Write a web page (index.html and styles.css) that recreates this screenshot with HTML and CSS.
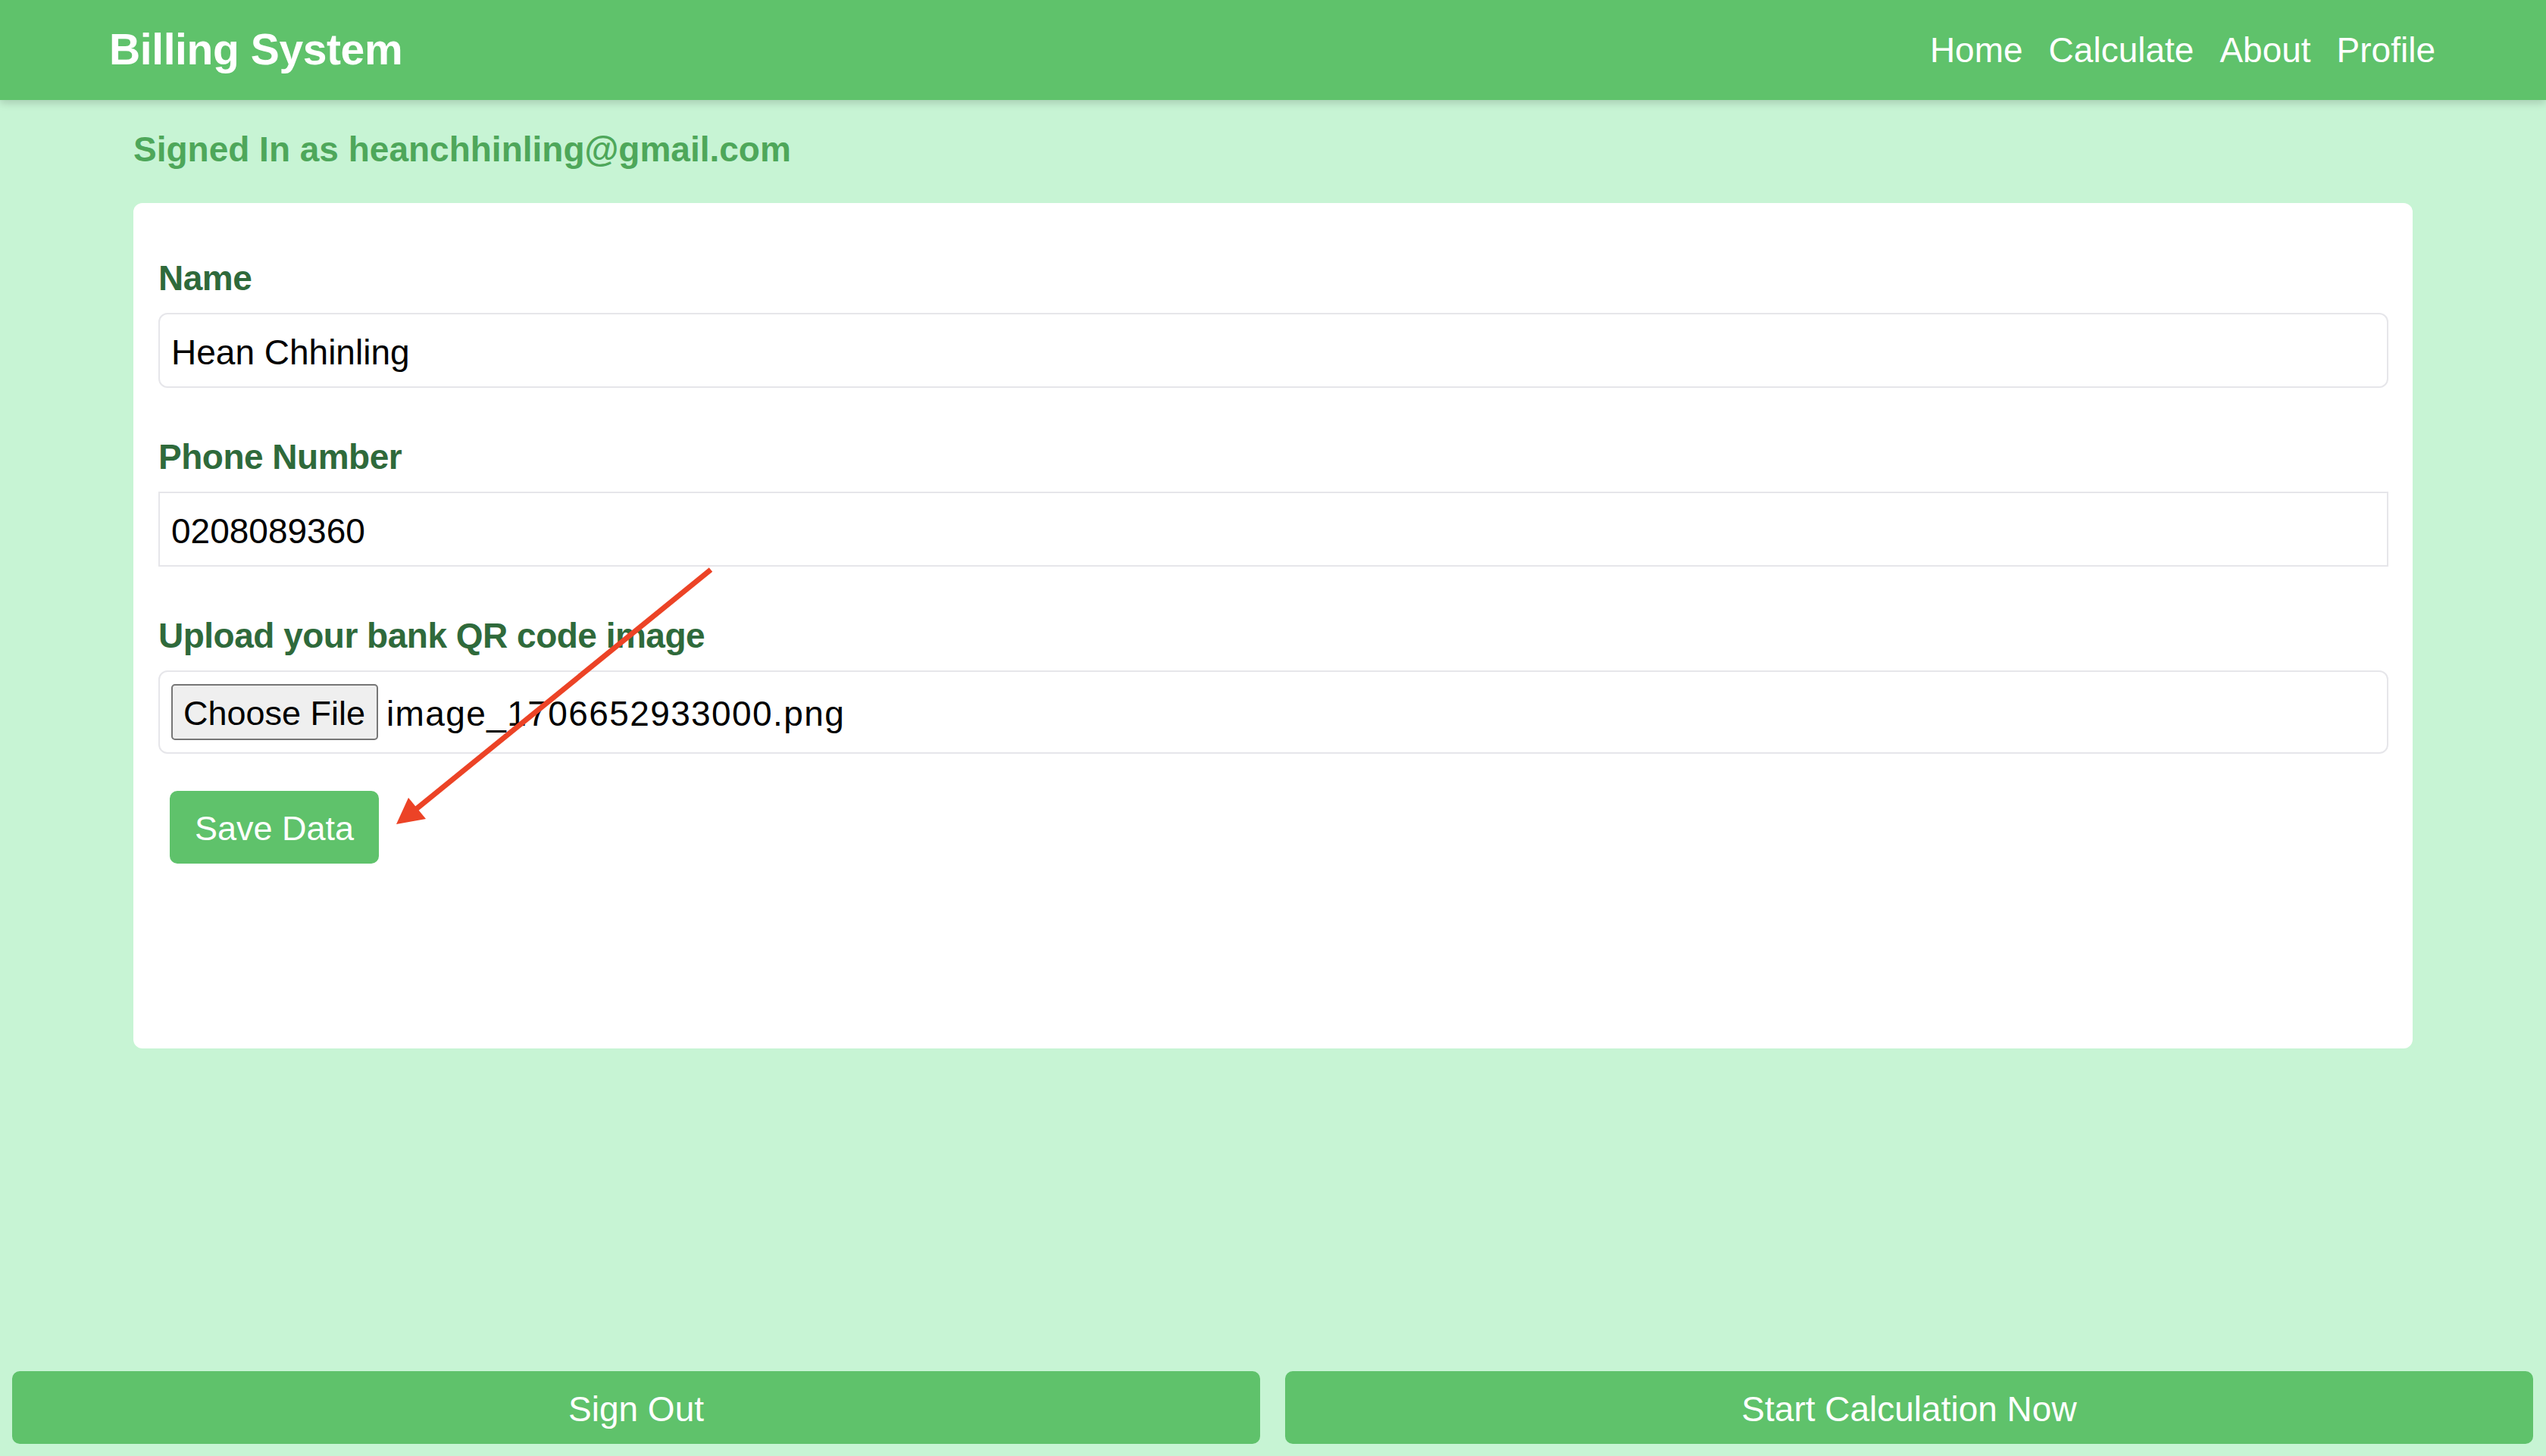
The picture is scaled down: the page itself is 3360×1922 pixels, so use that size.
FILE: index.html
```html
<!DOCTYPE html>
<html lang="en">
<head>
<meta charset="utf-8">
<title>Billing System</title>
<link rel="stylesheet" href="styles.css">
</head>
<body>
<div class="page">
  <header class="navbar">
    <div class="brand">Billing System</div>
    <nav class="links">
      <a href="#">Home</a>
      <a href="#">Calculate</a>
      <a href="#">About</a>
      <a href="#">Profile</a>
    </nav>
  </header>

  <main class="main">
    <div class="signed">Signed In as heanchhinling@gmail.com</div>
    <section class="card">
      <div class="group">
        <label class="label">Name</label>
        <div class="field rounded">Hean Chhinling</div>
      </div>
      <div class="group">
        <label class="label">Phone Number</label>
        <div class="field">0208089360</div>
      </div>
      <div class="group">
        <label class="label">Upload your bank QR code image</label>
        <div class="filebox">
          <span class="file-btn">Choose File</span>
          <span class="file-name">image_1706652933000.png</span>
        </div>
      </div>
      <button class="save">Save Data</button>
    </section>
  </main>

  <footer class="footer">
    <button class="wide">Sign Out</button>
    <button class="wide">Start Calculation Now</button>
  </footer>

  <svg class="annot" width="3360" height="1922" viewBox="0 0 3360 1922">
    <line x1="938" y1="752" x2="548" y2="1069" stroke="#ec4326" stroke-width="7" stroke-linecap="butt"/>
    <polygon points="523,1088 539,1053 562,1081" fill="#ec4326"/>
  </svg>
</div>
</body>
</html>
```

FILE: styles.css
```css
* { box-sizing: border-box; }

html, body {
  margin: 0;
  padding: 0;
}

body {
  background: #c7f4d4;
  font-family: "Liberation Sans", Arial, Helvetica, sans-serif;
  color: #000;
}

.page {
  position: relative;
  height: 100vh;
  display: flex;
  flex-direction: column;
}

.navbar {
  height: 132px;
  flex: 0 0 132px;
  background: #5fc26b;
  display: flex;
  align-items: center;
  justify-content: space-between;
  padding: 0 146px 0 144px;
  box-shadow: 0 4px 10px rgba(0, 0, 0, 0.16);
  position: relative;
  z-index: 1;
}

.brand {
  color: #fff;
  font-weight: 700;
  font-size: 57px;
  letter-spacing: -0.4px;
  padding-bottom: 2px;
}

.links {
  display: flex;
  gap: 34px;
}

.links a {
  color: #fff;
  text-decoration: none;
  font-size: 46px;
}

.main {
  flex: 1;
  padding: 39px 176px 0 176px;
}

.signed {
  color: #4ea75a;
  font-weight: 700;
  font-size: 46px;
  line-height: 53px;
  margin-bottom: 44px;
}

.card {
  background: #fff;
  border-radius: 12px;
  padding: 73px 32px 244px 33px;
}

.group {
  margin-bottom: 65px;
}

.group:nth-child(3) {
  margin-bottom: 49px;
}

.label {
  display: block;
  color: #2f6a3b;
  font-weight: 700;
  font-size: 46px;
  letter-spacing: -0.5px;
  line-height: 53px;
  margin-bottom: 19px;
}

.field {
  height: 99px;
  border: 2px solid #e6e6ea;
  display: flex;
  align-items: center;
  padding: 4px 15px 0;
  font-size: 46px;
}

.field.rounded {
  border-radius: 12px;
}

.filebox {
  height: 110px;
  border: 2px solid #e6e6ea;
  border-radius: 12px;
  display: flex;
  align-items: center;
  padding: 0 15px;
  font-size: 46px;
}

.file-btn {
  display: inline-flex;
  align-items: center;
  height: 74px;
  width: 273px;
  padding: 4px 14px 0;
  background: #efefef;
  border: 2px solid #767676;
  border-radius: 5px;
  font-size: 45px;
}

.file-name {
  margin-left: 11px;
  letter-spacing: 1.4px;
  padding-top: 4px;
}

.save {
  margin-left: 15px;
  height: 96px;
  padding: 4px 33px 0;
  background: #5fc26b;
  color: #fff;
  border: none;
  border-radius: 10px;
  font-family: inherit;
  font-size: 45px;
}

.footer {
  display: flex;
  gap: 33px;
  padding: 0 17px 16px 16px;
}

.wide {
  flex: 1;
  height: 96px;
  background: #5fc26b;
  color: #fff;
  border: none;
  border-radius: 10px;
  font-family: inherit;
  font-size: 46px;
  padding-top: 4px;
}

.annot {
  position: absolute;
  left: 0;
  top: 0;
  pointer-events: none;
  z-index: 2;
}
```
